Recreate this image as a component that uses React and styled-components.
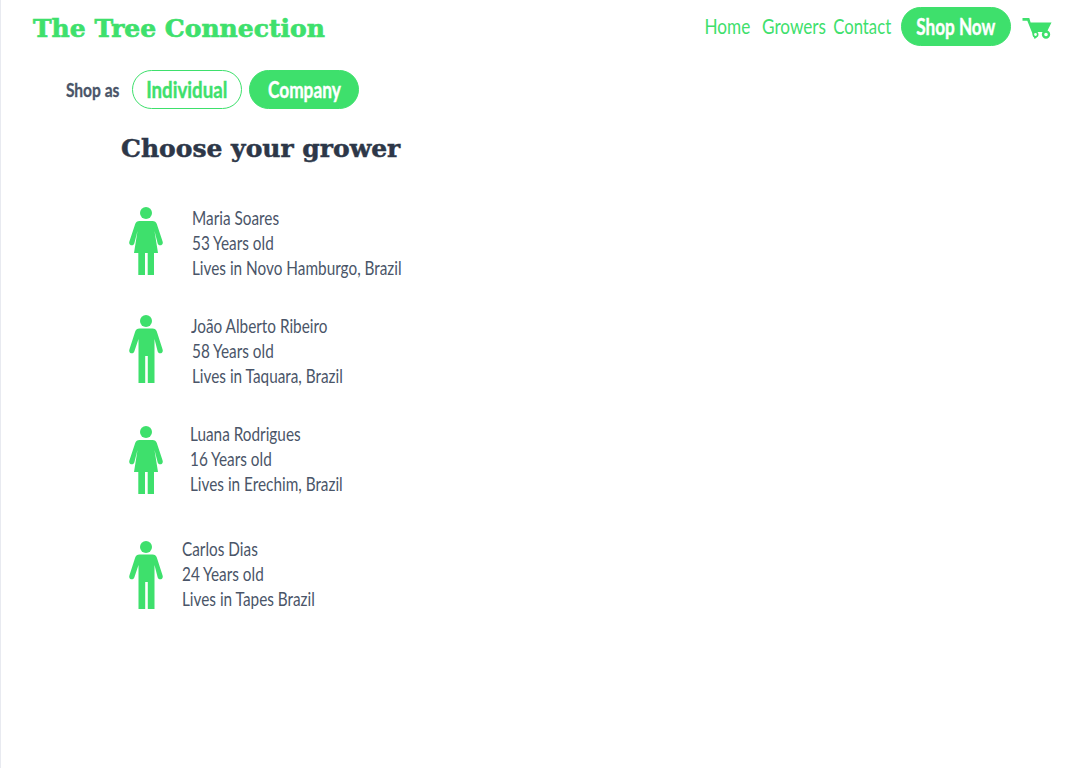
import React from "react";
import styled, { createGlobalStyle } from "styled-components";

const GREEN = "#3ee06c";
const INK = "#4a5568";
const DARK = "#2d3748";
const NARROW = 'Lato, "Liberation Sans", sans-serif';
const SLAB = '"DejaVu Serif", "Liberation Serif", serif';

const GlobalStyle = createGlobalStyle`
  html, body {
    margin: 0;
    padding: 0;
    background: #fff;
    font-family: ${NARROW};
  }
`;

const Page = styled.div`
  min-height: 768px;
  border-left: 1px solid #e8eaf0;
  box-sizing: border-box;
`;

// no narrow family is installed, so the text gets squeezed sideways
const Squeeze = styled.span`
  display: inline-block;
  flex: none;
  white-space: nowrap;
  transform: scaleX(${(p) => p.$scale});
  transform-origin: center;
`;

const Header = styled.header`
  display: flex;
  align-items: flex-start;
  justify-content: space-between;
  height: 56px;
  padding: 0 28px 0 32px;
`;

const Logo = styled.h1`
  margin: 14px 0 0;
  font-family: ${SLAB};
  font-weight: 700;
  font-size: 25px;
  line-height: 30px;
  color: ${GREEN};
  -webkit-text-stroke: 0.7px ${GREEN};
`;

const Nav = styled.nav`
  display: flex;
  align-items: center;
  margin-top: 7px;
`;

const NavLink = styled.a`
  display: flex;
  justify-content: center;
  width: ${(p) => p.$width}px;
  margin-right: ${(p) => p.$gap}px;
  padding-bottom: 3px;
  font-size: 22px;
  color: ${GREEN};
`;

const Pill = styled.button`
  display: flex;
  align-items: center;
  justify-content: center;
  box-sizing: border-box;
  width: 110px;
  height: 39px;
  padding: 0;
  border: 1.5px solid ${GREEN};
  border-radius: 20px;
  background: ${(p) => (p.$filled ? GREEN : "#fff")};
  color: ${(p) => (p.$filled ? "#fff" : GREEN)};
  font-family: ${NARROW};
  font-size: 22px;
  font-weight: 700;
  -webkit-text-stroke: 0.4px ${(p) => (p.$filled ? "#fff" : GREEN)};
`;

const Cart = styled.svg`
  display: block;
  width: 30px;
  height: 22px;
  margin: 4px 0 0 11px;
`;

const ShopBar = styled.div`
  display: flex;
  align-items: center;
  height: 39px;
  margin-top: 14px;
  padding-left: 65px;
`;

const ShopLabel = styled.span`
  display: flex;
  justify-content: center;
  width: 53px;
  margin-right: 13px;
  font-size: 19px;
  font-weight: 700;
  color: ${INK};
  -webkit-text-stroke: 0.3px ${INK};
`;

const PillGap = styled.div`
  width: 7px;
`;

const Main = styled.main`
  padding-left: 120px;
`;

const Title = styled.h2`
  margin: 22px 0 0;
  font-family: ${SLAB};
  font-size: 25px;
  line-height: 36px;
  font-weight: 700;
  color: ${DARK};
  -webkit-text-stroke: 0.5px ${DARK};
`;

const Growers = styled.ul`
  margin: 40px 0 0;
  padding: 0;
  list-style: none;
`;

const Grower = styled.li`
  display: flex;
  align-items: flex-start;
  height: 68px;
  margin-bottom: ${(p) => p.$after}px;
`;

const Figure = styled.svg`
  flex: none;
  display: block;
  width: 34px;
  height: 68px;
  margin-left: 8px;
  overflow: visible;
`;

const Details = styled.div`
  margin-left: ${(p) => p.$left}px;
  margin-top: ${(p) => p.$top}px;
  font-size: 19px;
  line-height: 25px;
  color: ${INK};
`;

const Line = styled.div`
  margin-left: ${(p) => p.$shift || 0}px;
  white-space: nowrap;
  transform: scaleX(0.807);
  transform-origin: left center;
`;

function Woman() {
  return (
    <Figure viewBox="0 0 34 68" fill={GREEN}>
      <circle cx="17" cy="6" r="6" />
      <path d="M10.500 14h13c2.200 0 3.600 1 4.300 3l5.800 17.500c.6 1.800-.1 3.200-1.500 3.700-1.400.5-2.800-.2-3.400-1.800L25.500 24l3.500 22h-4v22h-6.300V46h-2.700v22H9.300V46H5l3.500-22-3.200 12.400c-.6 1.600-2 2.300-3.400 1.800C.5 37.700-.2 36.300.4 34.500L6.200 17c.7-2 2.100-3 4.300-3z" />
    </Figure>
  );
}

function Man() {
  return (
    <Figure viewBox="0 0 34 68" fill={GREEN}>
      <circle cx="17" cy="6" r="6" />
      <path d="M10.500 13.500h13c2.200 0 3.600 1 4.300 3l5.800 18c.6 1.800-.1 3.200-1.500 3.700-1.400.5-2.800-.2-3.400-1.800L25.500 24v44h-6.700V41h-2.600v27H9.500V24L5.300 36.400c-.6 1.600-2 2.300-3.400 1.800C.5 37.700-.2 36.300.4 34.500l5.800-18c.7-2 2.100-3 4.300-3z" />
    </Figure>
  );
}

const growers = [
  { name: "Maria Soares", age: "53 Years old", home: "Lives in Novo Hamburgo, Brazil", Icon: Woman, left: 29, top: -2, after: 40 },
  { name: "João Alberto Ribeiro", nameShift: -1, age: "58 Years old", home: "Lives in Taquara, Brazil", Icon: Man, left: 29, top: -2, after: 43 },
  { name: "Luana Rodrigues", age: "16 Years old", home: "Lives in Erechim, Brazil", Icon: Woman, left: 27, top: -5, after: 47 },
  { name: "Carlos Dias", age: "24 Years old", home: "Lives in Tapes Brazil", Icon: Man, left: 19, top: -5, after: 0 },
];

export default function App() {
  return (
    <Page>
      <GlobalStyle />
      <Header>
        <Logo>The Tree Connection</Logo>
        <Nav>
          <NavLink $width={45} $gap={13}><Squeeze $scale={0.78}>Home</Squeeze></NavLink>
          <NavLink $width={62} $gap={9}><Squeeze $scale={0.78}>Growers</Squeeze></NavLink>
          <NavLink $width={57} $gap={10}><Squeeze $scale={0.76}>Contact</Squeeze></NavLink>
          <Pill $filled><Squeeze $scale={0.78}>Shop Now</Squeeze></Pill>
          <Cart viewBox="0 0 30 22" fill={GREEN}>
            <path d="M.5 0h6.800l1.300 4.500H29.500L24.800 14H12.300l2.500 5.500-2.200 1.500L5.300 2.800H.5z" />
            <circle cx="13.500" cy="16.500" r="2.200" fill="#fff" stroke={GREEN} strokeWidth="1.600" />
            <circle cx="24" cy="16.500" r="3" fill="#fff" stroke={GREEN} strokeWidth="2.400" />
          </Cart>
        </Nav>
      </Header>
      <ShopBar>
        <ShopLabel><Squeeze $scale={0.82}>Shop as</Squeeze></ShopLabel>
        <Pill><Squeeze $scale={0.85}>Individual</Squeeze></Pill>
        <PillGap />
        <Pill $filled><Squeeze $scale={0.785}>Company</Squeeze></Pill>
      </ShopBar>
      <Main>
        <Title>Choose your grower</Title>
        <Growers>
          {growers.map(({ name, nameShift, age, home, Icon, left, top, after }) => (
            <Grower key={name} $after={after}>
              <Icon />
              <Details $left={left} $top={top}>
                <Line $shift={nameShift}>{name}</Line>
                <Line>{age}</Line>
                <Line>{home}</Line>
              </Details>
            </Grower>
          ))}
        </Growers>
      </Main>
    </Page>
  );
}
